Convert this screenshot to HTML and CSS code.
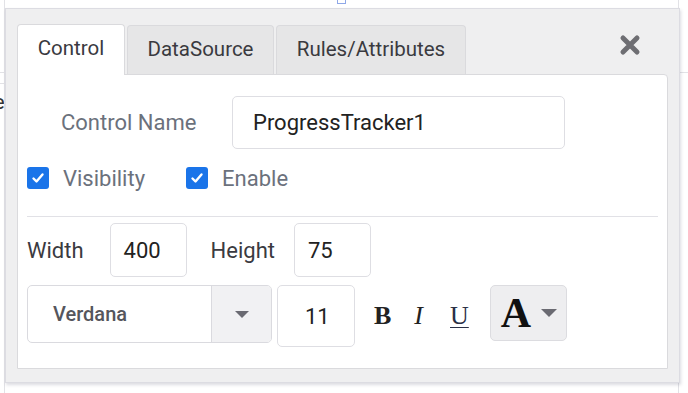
FILE: index.html
```html
<!DOCTYPE html>
<html lang="en">
<head>
    <meta charset="UTF-8">
    <meta name="viewport" content="width=device-width, initial-scale=1.0">
    <title>Control Properties</title>
    <link rel="stylesheet" href="styles.css">
</head>
<body>

    <div class="page">
        <div class="side side-left">
            <div class="side-row"></div>
            <div class="side-row short"></div>
            <div class="side-text">Title</div>
        </div>
        <div class="marker"></div>
        <div class="side side-right">
            <div class="side-row"></div>
        </div>
    </div>

    <div class="dialog">
        <div class="tab-bar">
            <div class="tab active">Control</div>
            <div class="tab">DataSource</div>
            <div class="tab">Rules/Attributes</div>
            <div class="close">
                <svg width="22" height="22" viewBox="0 0 22 22">
                    <path d="M4 4 L18 18 M18 4 L4 18" stroke="#6e6e73" stroke-width="5" stroke-linecap="round"/>
                </svg>
            </div>
        </div>

        <div class="panel">
            <div class="row name-row">
                <label class="label muted">Control Name</label>
                <div class="field name-field">ProgressTracker1</div>
            </div>

            <div class="row check-row">
                <label class="check">
                    <span class="box">
                        <svg width="16" height="16" viewBox="0 0 16 16"><path d="M3.5 8.5 L6.5 11.5 L12.5 4.5" fill="none" stroke="#fff" stroke-width="2.4" stroke-linecap="round" stroke-linejoin="round"/></svg>
                    </span>
                    <span class="muted">Visibility</span>
                </label>
                <label class="check">
                    <span class="box">
                        <svg width="16" height="16" viewBox="0 0 16 16"><path d="M3.5 8.5 L6.5 11.5 L12.5 4.5" fill="none" stroke="#fff" stroke-width="2.4" stroke-linecap="round" stroke-linejoin="round"/></svg>
                    </span>
                    <span class="muted">Enable</span>
                </label>
            </div>

            <hr class="divider">

            <div class="row size-row">
                <label class="label">Width</label>
                <div class="field small-field">400</div>
                <label class="label">Height</label>
                <div class="field small-field">75</div>
            </div>

            <div class="row font-row">
                <div class="select">
                    <span class="select-value">Verdana</span>
                    <span class="select-arrow"><span class="caret"></span></span>
                </div>
                <div class="field font-size">11</div>
                <span class="fmt bold">B</span>
                <span class="fmt italic">I</span>
                <span class="fmt under">U</span>
                <div class="color-btn">
                    <span class="big-a">A</span>
                    <span class="caret big-caret"></span>
                </div>
            </div>
        </div>
    </div>

</body>
</html>
```

FILE: styles.css
```css
body {
    margin: 0;
    width: 688px;
    height: 393px;
    overflow: hidden;
    background-color: #fff;
    font-family: 'Roboto', 'Liberation Sans', sans-serif;
    color: #333;
    position: relative;
}

/* page behind the dialog */
.page {
    display: flex;
    justify-content: space-between;
    height: 393px;
}

.side {
    width: 4px;
    border-right: 1px solid #e2e2e6;
    padding-top: 72px;
    overflow: hidden;
}

.side-right {
    width: 9px;
    border-right: none;
    border-left: 1px solid #e2e2e6;
}

.side-row {
    height: 10px;
    border-top: 1px solid #e2e2e6;
}

.side-row.short {
    height: 0;
}

.side-text {
    margin-left: -36px;
    margin-top: 6px;
    font-size: 21px;
}

.marker {
    width: 7px;
    height: 3px;
    border: 1px solid #8fa8e8;
    border-top: none;
}

/* dialog */
.dialog {
    position: absolute;
    left: 5px;
    top: 8px;
    width: 662px;
    height: 358px;
    padding: 15px 0 0 11px;
    background-color: #efeff0;
    border: 1px solid #dcdce2;
    box-shadow: 1px 2px 3px rgba(60, 60, 90, 0.18);
}

.tab-bar {
    display: flex;
    align-items: flex-end;
    height: 50px;
    width: 651px;
}

.tab {
    height: 49px;
    line-height: 47px;
    box-sizing: border-box;
    margin-right: 2px;
    background-color: #e6e6e7;
    border: 1px solid #dadadd;
    border-bottom: none;
    border-radius: 4px 4px 0 0;
    font-size: 20.5px;
    color: #3a3a3f;
    text-align: center;
}

.tab:nth-child(2) {
    width: 147px;
}

.tab:nth-child(3) {
    width: 190px;
}

.tab.active {
    width: 108px;
    height: 51px;
    margin-bottom: -1px;
    background-color: #fff;
}

.close {
    margin-left: auto;
    margin-right: 27px;
    align-self: center;
    margin-top: -4px;
}

.panel {
    width: 651px;
    height: 295px;
    box-sizing: border-box;
    background-color: #fff;
    border: 1px solid #dadadd;
    border-radius: 0 4px 0 0;
    padding: 21px 9px 0 9px;
}

.row {
    display: flex;
    align-items: center;
}

.label {
    font-size: 22px;
    color: #3a3a3f;
}

.muted {
    color: #6b717c;
}

.field {
    box-sizing: border-box;
    border: 1px solid #dedee3;
    border-radius: 5px;
    font-size: 22px;
    color: #222;
    display: flex;
    align-items: center;
}

.name-row .label {
    margin-left: 34px;
    width: 171px;
}

.name-field {
    width: 333px;
    height: 53px;
    padding-left: 20px;
}

.check-row {
    margin-top: 17px;
    font-size: 22px;
    height: 24px;
}

.check {
    display: flex;
    align-items: center;
    margin-right: 41px;
}

.box {
    width: 22px;
    height: 22px;
    border-radius: 3px;
    background-color: #1a74e9;
    display: flex;
    align-items: center;
    justify-content: center;
    margin-right: 14px;
}

.divider {
    border: none;
    border-top: 1px solid #e1e1e6;
    margin: 26px 0 6px 0;
}

.size-row .label {
    margin-right: 26px;
}

.size-row .label + .field + .label {
    margin-right: 19px;
}

.small-field {
    width: 77px;
    height: 54px;
    padding-left: 13px;
    margin-right: 24px;
}

.font-row {
    margin-top: 8px;
    align-items: flex-start;
}

.select {
    width: 245px;
    height: 58px;
    box-sizing: border-box;
    border: 1px solid #dadadf;
    border-radius: 5px;
    display: flex;
    overflow: hidden;
}

.select-value {
    flex: 1;
    display: flex;
    align-items: center;
    padding-left: 25px;
    font-size: 20px;
    font-weight: 500;
    color: #55565c;
}

.select-arrow {
    width: 59px;
    background-color: #f1f1f3;
    border-left: 1px solid #dadadf;
    display: flex;
    align-items: center;
    justify-content: center;
}

.caret {
    width: 0;
    height: 0;
    border-left: 7px solid transparent;
    border-right: 7px solid transparent;
    border-top: 7px solid #6a6a72;
}

.font-size {
    width: 78px;
    height: 62px;
    margin-left: 5px;
    padding-left: 27px;
    margin-right: 19px;
}

.fmt {
    font-family: 'Liberation Serif', serif;
    font-size: 26px;
    line-height: 62px;
    color: #222;
}

.bold {
    font-weight: bold;
    margin-right: 23px;
}

.italic {
    font-style: italic;
    margin-right: 27px;
}

.under {
    text-decoration: underline;
    text-underline-offset: 3px;
    text-decoration-thickness: 1px;
    margin-right: 21px;
    color: #2a2f45;
}

.color-btn {
    width: 77px;
    height: 56px;
    box-sizing: border-box;
    background-color: #eeeef0;
    border: 1px solid #dcdce0;
    border-radius: 5px;
    display: flex;
    align-items: center;
    padding-left: 10px;
    gap: 10px;
}

.big-a {
    font-family: 'Liberation Serif', serif;
    font-weight: bold;
    font-size: 42px;
    color: #111;
    line-height: 1;
}

.big-caret {
    border-left-width: 8px;
    border-right-width: 8px;
    border-top-width: 8px;
}
```
